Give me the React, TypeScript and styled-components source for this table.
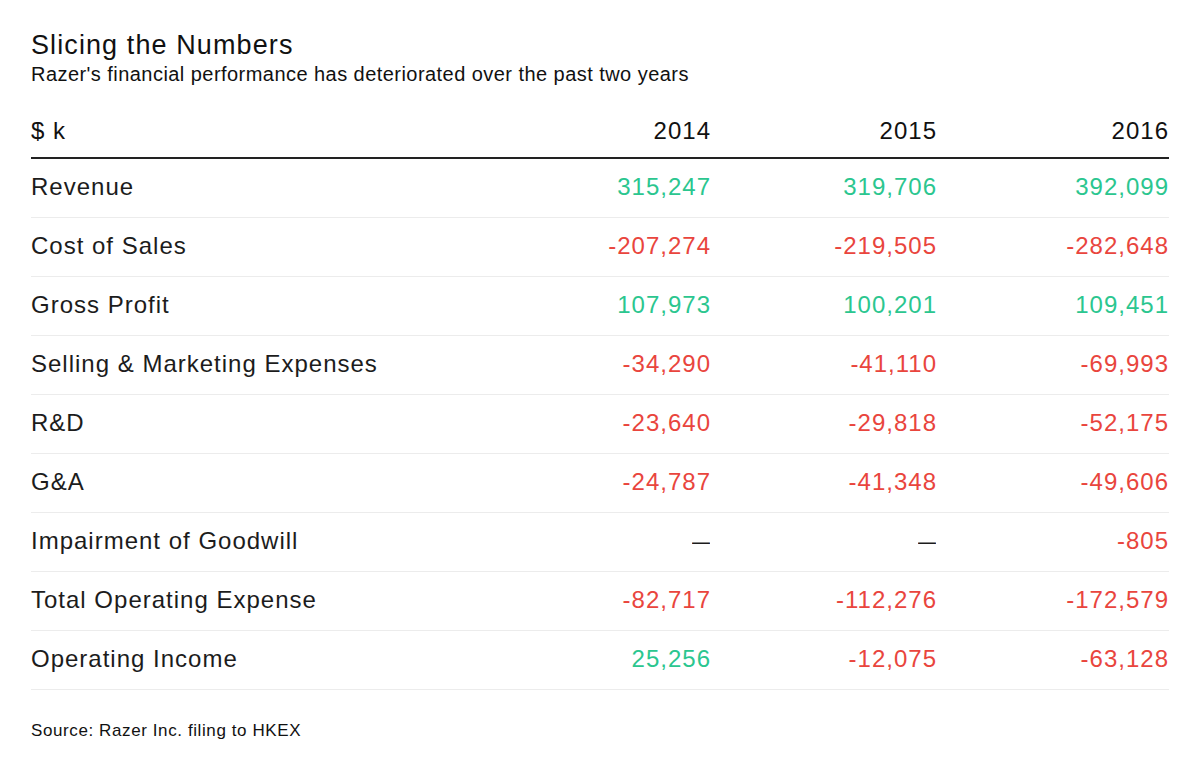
import React from "react";
import styled, { createGlobalStyle } from "styled-components";

const Global = createGlobalStyle`
  html, body { margin: 0; padding: 0; background: #fff; }
  body { font-family: "Liberation Sans", Arial, sans-serif; color: #1a1a1a; }
`;

const Page = styled.div`
  width: 1200px;
  height: 776px;
  box-sizing: border-box;
  padding: 30px 31px 0 31px;
  background: #fff;
`;

const Title = styled.h1`
  margin: 0 0 3px;
  font-size: 27px;
  line-height: 30px;
  font-weight: 400;
  letter-spacing: 1.1px;
  color: #111;
`;

const Subtitle = styled.p`
  margin: 0;
  font-size: 20px;
  line-height: 22px;
  letter-spacing: 0.45px;
  color: #111;
`;

const Table = styled.div`
  margin-top: 28px;
  display: grid;
  grid-template-columns: 1fr 226px 226px 232px;
`;

const HeadCell = styled.div<{ $right?: boolean }>`
  font-size: 24px;
  line-height: 26px;
  letter-spacing: 1px;
  padding: 5px 0 13px;
  text-align: ${(p) => (p.$right ? "right" : "left")};
  border-bottom: 2px solid #222;
  color: #111;
`;

const Cell = styled.div<{ $right?: boolean; $tone?: "pos" | "neg" | "none" }>`
  font-size: 24px;
  line-height: 56px;
  height: 58px;
  letter-spacing: 1px;
  text-align: ${(p) => (p.$right ? "right" : "left")};
  border-bottom: 1px solid #ececec;
  color: ${(p) =>
    p.$tone === "pos" ? "#2bc68f" : p.$tone === "neg" ? "#e9453d" : "#1c1c1c"};
`;

const Dash = styled.span`
  display: inline-block;
  letter-spacing: 0;
  margin-right: 1px;
  transform: scaleX(0.75);
  transform-origin: right center;
`;

const Source = styled.p`
  margin: 31px 0 0;
  font-size: 17px;
  line-height: 20px;
  letter-spacing: 0.6px;
  color: #111;
`;

type Row = { label: string; values: string[] };

const rows: Row[] = [
  { label: "Revenue", values: ["315,247", "319,706", "392,099"] },
  { label: "Cost of Sales", values: ["-207,274", "-219,505", "-282,648"] },
  { label: "Gross Profit", values: ["107,973", "100,201", "109,451"] },
  { label: "Selling & Marketing Expenses", values: ["-34,290", "-41,110", "-69,993"] },
  { label: "R&D", values: ["-23,640", "-29,818", "-52,175"] },
  { label: "G&A", values: ["-24,787", "-41,348", "-49,606"] },
  { label: "Impairment of Goodwill", values: ["—", "—", "-805"] },
  { label: "Total Operating Expense", values: ["-82,717", "-112,276", "-172,579"] },
  { label: "Operating Income", values: ["25,256", "-12,075", "-63,128"] },
];

const toneOf = (v: string): "pos" | "neg" | "none" =>
  v === "—" ? "none" : v.startsWith("-") ? "neg" : "pos";

export default function App() {
  return (
    <>
      <Global />
      <Page>
        <Title>Slicing the Numbers</Title>
        <Subtitle>Razer's financial performance has deteriorated over the past two years</Subtitle>
        <Table>
          <HeadCell>$ k</HeadCell>
          <HeadCell $right>2014</HeadCell>
          <HeadCell $right>2015</HeadCell>
          <HeadCell $right>2016</HeadCell>
          {rows.map((r) => (
            <React.Fragment key={r.label}>
              <Cell>{r.label}</Cell>
              {r.values.map((v, i) => (
                <Cell key={i} $right $tone={toneOf(v)}>
                  {v === "—" ? <Dash>—</Dash> : v}
                </Cell>
              ))}
            </React.Fragment>
          ))}
        </Table>
        <Source>Source: Razer Inc. filing to HKEX</Source>
      </Page>
    </>
  );
}
